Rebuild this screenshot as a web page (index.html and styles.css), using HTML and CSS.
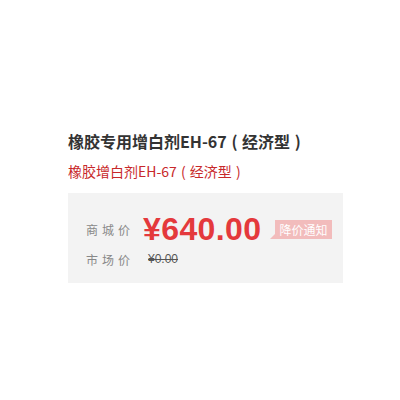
FILE: index.html
```html
<!DOCTYPE html>
<html>

<head>
    <meta charset="utf-8">
    <link rel="stylesheet" href="styles.css">
</head>

<body>
    <div class="product">
        <div class="title">橡胶专用增白剂EH-67 <span class="paren">(</span> 经济型 <span class="paren">)</span></div>
        <div class="subtitle">橡胶增白剂EH-67 <span class="paren">(</span> 经济型 <span class="paren">)</span></div>

        <div class="pricebox">
            <div class="row">
                <span class="label">商城价</span>
                <span class="price">¥640.00</span>
                <span class="notice">降价通知</span>
            </div>
            <div class="row">
                <span class="label">市场价</span>
                <span class="old">¥0.00</span>
            </div>
        </div>
    </div>
</body>

</html>
```

FILE: styles.css
```css
body {
    margin: 0;
    background: #fff;
    font-family: "Noto Sans CJK SC", "Microsoft YaHei", sans-serif;
}

.product {
    width: 275px;
    margin-left: 68px;
    padding-top: 128px;
}

.title {
    font-size: 16px;
    font-weight: bold;
    color: #333;
    line-height: 26px;
}

.subtitle {
    font-size: 14px;
    color: #c8282a;
    line-height: 20px;
    margin-top: 7px;
}

.paren {
    margin: 0 1px;
}

.pricebox {
    margin-top: 12px;
    height: 90px;
    background: #f3f3f3;
    padding: 17px 0 0 18px;
    box-sizing: border-box;
}

.row {
    display: flex;
    align-items: center;
}

.label {
    font-size: 12px;
    color: #888;
    letter-spacing: 4px;
    width: 57px;
}

.price {
    font-family: "Liberation Sans", Arial, sans-serif;
    font-size: 32px;
    font-weight: bold;
    color: #e4393c;
    line-height: 38px;
    letter-spacing: 0.4px;
}

.notice {
    position: relative;
    margin-left: 14px;
    background: #f2bcbc;
    color: #fff;
    font-size: 12px;
    padding: 1px 4px;
    line-height: 17px;
}

.notice:before {
    content: "";
    position: absolute;
    left: -5px;
    bottom: 0;
    border-right: 5px solid #f2bcbc;
    border-top: 5px solid transparent;
}

.old {
    font-family: "Liberation Sans", Arial, sans-serif;
    font-size: 12px;
    color: #555;
    text-decoration: line-through;
    margin-left: 5px;
    line-height: 22px;
}
```
